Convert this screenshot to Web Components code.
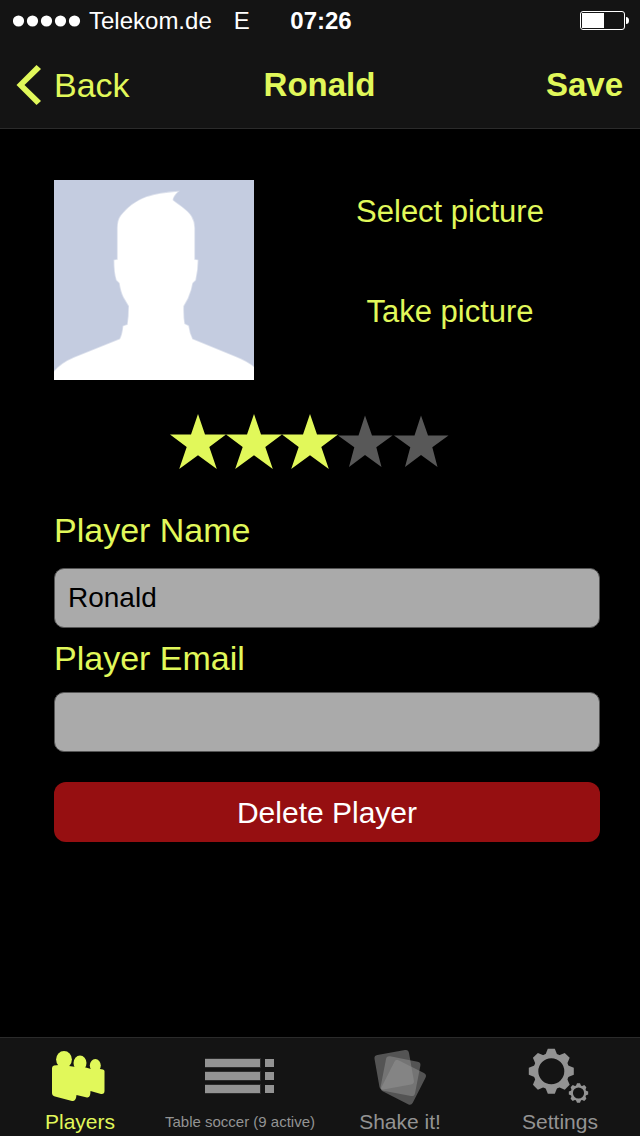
<!DOCTYPE html>
<html lang="en">
<head>
<meta charset="utf-8">
<meta name="viewport" content="width=device-width, initial-scale=1">
<title>Ronald</title>
<style>
  :root {
    --accent: #e1f85a;
    --bar: #141414;
    --line: #2b2b2b;
    --muted: #939393;
    --field: #aaaaaa;
    --danger: #960f11;
  }
  body {
    margin: 0;
    background: #000;
    color: var(--accent);
    font-family: "Liberation Sans", Arial, sans-serif;
  }
</style>
</head>
<body>
<player-screen></player-screen>

<script>
const define = (name, html, setup) => {
  const template = document.createElement('template');
  template.innerHTML = html;
  customElements.define(name, class extends HTMLElement {
    constructor() {
      super();
      this.attachShadow({ mode: 'open' }).append(template.content.cloneNode(true));
    }
    connectedCallback() {
      if (setup && !this.ready) { this.ready = true; setup(this, this.shadowRoot); }
    }
  });
};

define('status-bar', `
  <style>
    :host { display: grid; grid-template-columns: 1fr auto 1fr; align-items: center; height: 41px;
      padding: 0 11px 0 13px; background: var(--bar); color: #fff; font-size: 24px; line-height: 28px; }
    .carrier { display: flex; align-items: center; gap: 8px; }
    .network { margin-left: 14px; }
    time { font-weight: bold; }
    svg { display: block; }
    .battery { justify-self: end; }
  </style>
  <div class="carrier">
    <svg width="68" height="12" viewBox="0 0 68 12" fill="#fff" aria-hidden="true">
      <circle cx="5.5" cy="6" r="5.6"/><circle cx="19.5" cy="6" r="5.6"/><circle cx="33.5" cy="6" r="5.6"/><circle cx="47.5" cy="6" r="5.6"/><circle cx="61.5" cy="6" r="5.6"/>
    </svg>
    <span>Telekom.de</span><span class="network">E</span>
  </div>
  <time>07:26</time>
  <svg class="battery" width="49" height="19" viewBox="0 0 49 19" aria-hidden="true">
    <rect x=".5" y=".5" width="44" height="18" rx="2.5" fill="none" stroke="#fff"/>
    <path d="M2 2h22v15H2zM46 6q3 0 3 3.5T46 13z" fill="#fff"/>
  </svg>
`);

define('nav-bar', `
  <style>
    :host { display: grid; grid-template-columns: 1fr auto 1fr; align-items: center; height: 87px;
      padding: 0 17px 0 16px; background: var(--bar); border-bottom: 1px solid var(--line); }
    button { display: flex; align-items: center; gap: 13px; padding: 0; border: 0; background: none;
      color: inherit; font: 34px/40px "Liberation Sans", Arial, sans-serif; cursor: pointer; }
    h1 { margin: 0; font-size: 33px; line-height: 40px; font-weight: bold; }
    .action { justify-self: end; font-size: 33px; font-weight: bold; }
  </style>
  <button type="button">
    <svg width="25" height="40" viewBox="0 0 25 40" fill="currentColor" aria-hidden="true">
      <path d="M20.5 0 25 4 8.500 20 25 36 20.500 40 .5 20z"/>
    </svg>Back</button>
  <h1><slot></slot></h1>
  <button type="button" class="action">Save</button>
`);

define('player-avatar', `
  <style>
    :host { display: block; width: 200px; height: 200px; background: #c4cce0; }
    svg { display: block; width: 100%; height: 100%; }
  </style>
  <svg viewBox="0 0 600 600" role="img" aria-label="Player picture">
    <path fill="#fff" stroke="#fff" stroke-opacity=".4" stroke-width="5" d="M371 35C330 38 304 43 278 51 242 64 218 86 201 107Q191 120 191 144V239L181 241Q181 280 188 300L197 309Q201 335 209 351L225 378Q225 410 221 434L208 439Q206 463 198 478L60 533Q22 549 0 575V600H600V562Q580 545 545 531L415 478Q406 460 403 438L391 432Q387 410 388 378L401 355Q412 330 415 309L424 300Q431 270 431 241L421 239V144Q421 125 412 110C400 91 376 77 356 61Q355 50 371 35Z"/>
  </svg>
`);

define('picture-picker', `
  <style>
    :host { display: grid; grid-template-columns: auto 1fr; gap: 46px; align-items: start; }
    .actions { display: grid; gap: 40px; padding-top: 2px; }
    button { height: 60px; padding: 0; border: 0; background: none; color: inherit;
      font: 31px/36px "Liberation Sans", Arial, sans-serif; cursor: pointer; }
  </style>
  <player-avatar></player-avatar>
  <div class="actions">
    <button type="button">Select picture</button>
    <button type="button">Take picture</button>
  </div>
`);

define('star-rating', `
  <style>
    :host { display: flex; justify-content: center; }
    button { width: 56px; height: 56px; padding: 0; border: 0; background: none; color: #585858; cursor: pointer; }
    button.on { color: var(--accent); }
    svg { display: block; }
  </style>
`, (host, root) => {
  const value = Number(host.getAttribute('value'));
  const full = 'M28 0 35 20.500H56L39.300 33 46.800 55 28 41.300 9.200 55 16.700 33 0 20.500H21z';
  const empty = 'M27 1.500 34 21.500H54.500L38.300 33.300 43.500 53 27 41 11 53 16.300 33.300 0 21.500H20.500z';
  for (let i = 1; i <= 5; i++) {
    const star = document.createElement('button');
    star.type = 'button';
    star.className = i <= value ? 'on' : '';
    star.setAttribute('aria-label', i + ' of 5 stars');
    star.innerHTML = `<svg width="56" height="56" viewBox="0 0 56 56" fill="currentColor"><path d="${i <= value ? full : empty}"/></svg>`;
    root.append(star);
  }
});

define('text-field', `
  <style>
    :host { display: grid; gap: 18px; }
    label { font-size: 34px; line-height: 40px; }
    input { box-sizing: border-box; width: 100%; height: 60px; margin: 0; padding: 0 13px; border: 1px solid #555;
      border-radius: 10px; background: var(--field); color: #000; font: 28px/32px "Liberation Sans", Arial, sans-serif; outline: 0; }
  </style>
  <label for="field"><slot></slot></label>
  <input id="field">
`, (host, root) => {
  const input = root.querySelector('input');
  input.type = host.getAttribute('type') || 'text';
  input.value = host.getAttribute('value') || '';
});

define('danger-button', `
  <style>
    :host { display: block; }
    button { display: block; width: 100%; height: 60px; padding: 2px 0 0; border: 0; border-radius: 12px;
      background: var(--danger); color: #fff; font: 30px/36px "Liberation Sans", Arial, sans-serif; cursor: pointer; }
  </style>
  <button type="button"><slot></slot></button>
`);

const teeth = [0, 45, 90, 135, 180, 225, 270, 315]
  .map(a => `<path d="M-6.500-15-3.500-22.500H3.500L6.500-15z" transform="rotate(${a})"/>`).join('');
const gear = `<circle r="15.500" fill="none" stroke="currentColor" stroke-width="5"/>${teeth}`;
const icons = {
  players: `<ellipse cx="24" cy="13.500" rx="7.900" ry="8.500"/><ellipse cx="40" cy="17" rx="6.500" ry="7.500"/><ellipse cx="55.300" cy="19.500" rx="5.500" ry="6.500"/>
    <path d="M12 22Q12 20 14 19.500L19 19 20 20H29L36 21H44L51 23H60L63 23.500Q64.500 24 64.500 25V45Q64.500 48.500 61 48L50.500 45Q50.500 52 47 51.500L36.500 49Q36 55.500 32 55L15 50.500Q12 49.500 12 47z"/>`,
  list: `<path fill="#444" d="M5 12H61V22H5zM5 25H61V35H5zM5 38H61V48H5z" opacity=".5"/>
    <path d="M5 13H60V21H5zM65 13H74V21H65zM5 26H60V34H5zM65 26H74V34H65zM5 39H60V47H5zM65 39H74V47H65z"/>`,
  cards: [-10, 11, 27].map(a => `<rect x="20" y="9" width="35" height="35" rx="3.500" opacity=".5" transform="rotate(${a} 20 44)"/>`).join(''),
  gears: `<g transform="translate(31.300 25.300)">${gear}</g>
    <g transform="translate(58.500 47) scale(.43)">${gear}</g>`
};

define('tab-item', `
  <style>
    :host { display: block; color: var(--muted); }
    :host([active]) { color: var(--accent); }
    button { display: grid; justify-items: center; align-content: start; gap: 6px; width: 100%; padding: 8px 0 2px;
      border: 0; background: none; color: inherit; font: 21px/24px "Liberation Sans", Arial, sans-serif; cursor: pointer; white-space: nowrap; }
    :host([compact]) button { font-size: 15px; }
    svg { display: block; overflow: visible; }
  </style>
  <button type="button"><svg width="80" height="58" viewBox="0 0 80 58" fill="currentColor" aria-hidden="true"></svg><span><slot></slot></span></button>
`, (host, root) => {
  root.querySelector('svg').innerHTML = icons[host.getAttribute('icon')];
});

define('tab-bar', `
  <style>
    :host { display: grid; grid-template-columns: repeat(4, 1fr); background: var(--bar); border-top: 1px solid var(--line); }
  </style>
  <slot></slot>
`);

define('player-screen', `
  <style>
    :host { display: flex; flex-direction: column; min-height: 100vh; }
    main { flex: 1; padding: 51px 40px 40px 54px; }
    star-rating { margin: 34px 34px 0 0; }
    form { display: grid; margin-top: 40px; }
    .email { margin-top: 10px; gap: 14px; }
    danger-button { margin-top: 30px; }
  </style>
  <status-bar></status-bar>
  <nav-bar>Ronald</nav-bar>
  <main>
    <picture-picker></picture-picker>
    <star-rating value="3"></star-rating>
    <form>
      <text-field value="Ronald">Player Name</text-field>
      <text-field class="email" type="email">Player Email</text-field>
      <danger-button>Delete Player</danger-button>
    </form>
  </main>
  <tab-bar>
    <tab-item icon="players" active>Players</tab-item>
    <tab-item icon="list" compact>Table soccer (9 active)</tab-item>
    <tab-item icon="cards">Shake it!</tab-item>
    <tab-item icon="gears">Settings</tab-item>
  </tab-bar>
`);
</script>
</body>
</html>
